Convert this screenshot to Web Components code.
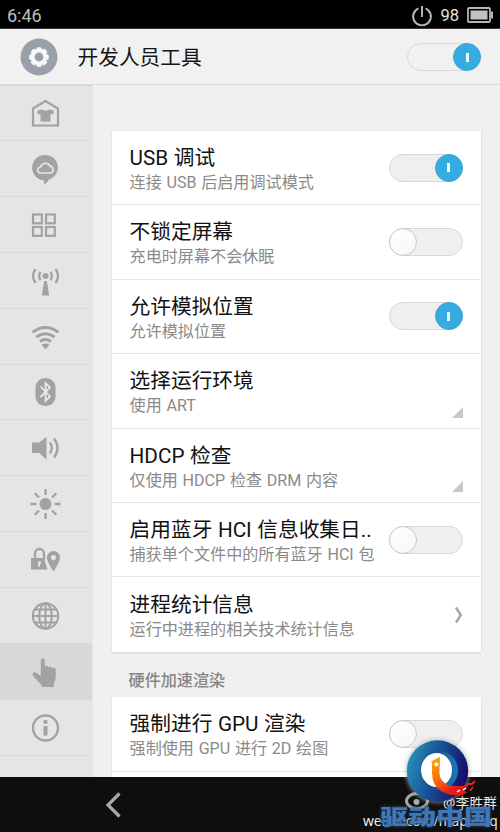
<!DOCTYPE html>
<html lang="zh-CN">
<head>
<meta charset="utf-8">
<title>开发人员工具</title>
<style>
html,body{margin:0;padding:0;background:#000}
body{width:500px;height:832px;overflow:hidden;font-family:Roboto,"Noto Sans CJK SC",sans-serif}
</style>
</head>
<body>
<settings-screen></settings-screen>
<script>
const define=(name,html,setup)=>customElements.define(name,class extends HTMLElement{
  constructor(){
    super();
    const t=document.createElement('template');
    t.innerHTML=html;
    this.attachShadow({mode:'open'}).append(t.content.cloneNode(true));
  }
  connectedCallback(){ if(setup) setup(this,this.shadowRoot); }
});

define('status-bar',`<style>
:host{display:flex;align-items:center;box-sizing:border-box;height:29px;padding:1px 7px 0 7px;background:#000;color:#bdbdbd;border-bottom:1px solid #383538;flex:none}
.time{flex:1;font-size:18px;line-height:26px;padding-top:2px}
.pct{font-size:16.5px;line-height:26px;color:#e4e4e4;padding-top:2px;margin:0 8px 0 7px}
svg{display:block}
</style>
<span class="time">6:46</span>
<svg width="22" height="24" viewBox="0 0 22 24" fill="none" stroke="#b9b9b9" stroke-width="1.9"><path d="M7.400 5.300A8.900 8.900 0 1 0 14.600 5.300M11 3v11"/></svg>
<span class="pct">98</span>
<svg width="26" height="16" viewBox="0 0 26 16"><rect x="1" y="1" width="22" height="14" rx="1" fill="none" stroke="#b5b5b5" stroke-width="1.8"/><rect x="3.500" y="3.500" width="17" height="9" fill="#c1c1c1"/><path d="M24 4.500h2v7h-2z" fill="#b5b5b5"/></svg>`);

define('toggle-switch',`<style>
:host{display:block;box-sizing:border-box;width:74px;height:28px;border:1px solid #d8d8d8;border-radius:14px;background:#efefef;flex:none}
.knob{box-sizing:border-box;width:28px;height:28px;margin:-1px;border-radius:50%;background:linear-gradient(135deg,#fff,#f6f6f6);border:1px solid #c8c8c8;display:flex;align-items:center;justify-content:center}
:host([on]) .knob{margin-left:45px;background:#34ace1;border-color:#43a3d0}
:host([on]) .knob::after{content:"";width:3px;height:9px;background:#f4fbff}
:host([plain]){background:#f1f1f1}
</style><div class="knob"></div>`);

define('title-bar',`<style>
:host{display:flex;align-items:center;box-sizing:border-box;height:56px;padding:0 19px 0 20px;background:#f1f1f1;border-bottom:1px solid #dadada;flex:none}
.name{flex:1;font-size:20.700px;line-height:30px;color:#151515;margin-left:19.500px;padding-top:2px;white-space:nowrap}
toggle-switch{margin-top:1px}
</style>
<svg width="38" height="38" viewBox="0 0 38 38"><circle cx="19" cy="19" r="18.500" fill="#98a1a9"/><g fill="#f7f8f9"><circle cx="19" cy="19" r="8.300"/><rect x="16.300" y="9.200" width="5.400" height="19.600" rx="1.500"/><rect x="16.300" y="9.200" width="5.400" height="19.600" rx="1.500" transform="rotate(45 19 19)"/><rect x="16.300" y="9.200" width="5.400" height="19.600" rx="1.500" transform="rotate(90 19 19)"/><rect x="16.300" y="9.200" width="5.400" height="19.600" rx="1.500" transform="rotate(135 19 19)"/></g><circle cx="19" cy="19" r="4.400" fill="#98a1a9"/></svg>
<span class="name"><slot></slot></span><toggle-switch on plain></toggle-switch>`);

const glyphs={
theme:`<path d="M4 11.500 16.500 4 29 11.500V28.500H4z" fill="none" stroke="#a2a2a2" stroke-width="2.200"/><path d="M8.500 13.500 13 12.500q3.500 2.400 7 0l4.500 1v3.800h-3V24.500h-10v-7.200h-3z"/>`,
cloud:`<path d="M16.500 2a12.500 12.500 0 0 1 3.500 24.500q-1.500 3-5 5.500l.2-4.700A12.600 12.600 0 0 1 16.500 2z"/><path d="M11.500 20a3 3 0 0 1 .2-6 5 5 0 0 1 9.300-.8 3.500 3.500 0 0 1 .8 6.800z" fill="none" stroke="#e5e5e5" stroke-width="1.700"/>`,
apps:`<g fill="none" stroke="#a2a2a2" stroke-width="2.200"><rect x="4" y="5.500" width="8.800" height="8.800"/><rect x="17" y="5.500" width="8.800" height="8.800"/><rect x="4" y="18" width="8.800" height="8.800"/><rect x="17" y="18" width="8.800" height="8.800"/></g>`,
antenna:`<circle cx="16.500" cy="11" r="3"/><path d="M15.200 16h2.600l2.400 14.500h-7.400z"/><path d="M11.500 6.800q-2.600 4.200 0 8.400M21.500 6.800q2.600 4.200 0 8.400M6.500 4q-5 7 0 14M26.500 4q5 7 0 14" fill="none" stroke="#a2a2a2" stroke-width="2.300"/>`,
wifi:`<path d="M3.500 11.300q13-9.600 26 0M7.300 16q9.200-6.600 18.400 0M11 20.500q5.500-3.800 11 0" fill="none" stroke="#a2a2a2" stroke-width="2.900"/><path d="m12.500 23.500q4-2 8 0l-4 5z"/>`,
bt:`<rect x="6.500" y="2" width="20" height="28" rx="9.500"/><path d="m11.500 10.500 9.500 10-4.500 4.500V7L21 11.500l-9.500 9.500" fill="none" stroke="#e8e8e8" stroke-width="1.800"/>`,
sound:`<path d="M3 10.500h7L17.500 5v22.500L10 21H3z"/><path d="M20.800 10.500q4 5.500 0 11M25 6.500q7 9.500 0 19" fill="none" stroke="#a2a2a2" stroke-width="2.300"/>`,
sun:`<circle cx="16.500" cy="16" r="6"/><path d="M16.500 1v6M16.500 25v6M1.500 16h6M25.500 16h6M5.700 5.200 10 9.500M23 22.500l4.300 4.300M27.300 5.200 23 9.500M10 22.500l-4.300 4.300" fill="none" stroke="#a2a2a2" stroke-width="2.300"/>`,
lock:`<path d="M2 14h13.500q.5 5 3 11.500H2z"/><path d="M6 15V9.500a4.500 4.500 0 0 1 9 0V15" fill="none" stroke="#a2a2a2" stroke-width="2.300"/><path d="M9 17.500h3v2.500h-1v3H9.500v-3H9z" fill="#e5e5e5"/><path d="M24.500 7a6.600 6.600 0 0 1 6.600 6.600q0 4.400-6.600 13.900-6.600-9.500-6.600-13.900A6.600 6.600 0 0 1 24.500 7zm0 4a2.600 2.600 0 1 0 .01 0z" fill-rule="evenodd"/>`,
globe:`<g fill="none" stroke="#a2a2a2" stroke-width="2"><circle cx="16.500" cy="16" r="12.700"/><ellipse cx="16.500" cy="16" rx="6.300" ry="12.700"/><path d="M16.500 3v26M4 16h25M6 9.500h21M6 22.500h21"/></g>`,
hand:`<path d="M11.800 4.500q0-2.300 2-2.300t2 2.300v7q.2-2 2-1.800 1.700.1 1.800 2.300.2-1.700 1.900-1.500 1.700.2 1.700 2.200.3-1.300 1.900-1.100 1.600.3 1.600 2.400v6q0 4.500-1.700 7V31H12.500v-2L4.500 20.500q-2-3 0-4 1.500-.7 4 1l3.300 2.500z"/>`,
info:`<circle cx="16.500" cy="16" r="12.500" fill="none" stroke="#a2a2a2" stroke-width="2.300"/><rect x="14.500" y="8" width="4" height="4" rx="1.400"/><path d="M14.500 14h4v9.500h-4z"/>`
};
define('side-item',`<style>
:host{display:flex;align-items:center;box-sizing:border-box;height:55.91px;padding:2px 0 0 29px;border-bottom:1px solid #d9d9d9;flex:none}
:host([selected]){background:#d8d8d8}
svg{display:block;fill:#a2a2a2}
</style><svg width="33" height="33" viewBox="0 0 33 33"></svg>`,(el,root)=>{root.querySelector('svg').innerHTML=glyphs[el.getAttribute('icon')]});

define('side-rail',`<style>
:host{display:flex;flex-direction:column;box-sizing:border-box;width:93px;background:#e5e5e5;border-right:1px solid #e3e3e3;flex:none;overflow:hidden;box-shadow:inset 0 1px 0 #d2d2d2}
</style><slot></slot>`);

define('setting-row',`<style>
:host{display:flex;align-items:center;box-sizing:border-box;height:74.4px;padding:0 18px;border-bottom:1px solid #e9e9e9;flex:none}
:host([last]){border-bottom:0}
.text{flex:1;min-width:0;white-space:nowrap;padding-top:4.5px}
.title{font-size:20.700px;line-height:26px;color:#111;word-spacing:.4px}
.sub{font-size:16.100px;line-height:24px;color:#8a8a8a;word-spacing:.7px}
.end{display:flex;align-items:center;height:100%;flex:none}
.corner{align-self:flex-end;margin-bottom:10px}
svg{display:block}
</style><div class="text"><div class="title"></div><div class="sub"></div></div><div class="end"></div>`,(el,root)=>{
  root.querySelector('.title').textContent=el.getAttribute('label');
  root.querySelector('.sub').textContent=el.getAttribute('note');
  root.querySelector('.end').innerHTML={
    on:'<toggle-switch on></toggle-switch>',
    off:'<toggle-switch></toggle-switch>',
    menu:'<svg class="corner" width="11" height="11" viewBox="0 0 11 11"><path d="M11 0v11H0z" fill="#c8c8c8"/></svg>',
    go:'<svg width="10" height="18" viewBox="0 0 10 18"><path d="M3 1.500 7.800 9 3 16.500" fill="none" stroke="#a8a8a8" stroke-width="2.500"/></svg>'
  }[el.getAttribute('kind')]||'';
});

define('setting-card',`<style>
:host{display:flex;flex-direction:column;width:369.400px;background:#fff;box-shadow:0 1px 2px rgba(0,0,0,.14);flex:none}
</style><slot></slot>`);

define('section-label',`<style>
:host{display:block;height:45.500px;box-sizing:border-box;padding:17px 0 0 17px;font-size:16.100px;line-height:24px;font-weight:500;color:#858585;flex:none}
</style><slot></slot>`);

define('nav-bar',`<style>
:host{display:flex;align-items:center;height:55px;padding-left:104px;background:#0e0e0e;flex:none}
svg{display:block}
</style><svg width="18" height="28" viewBox="0 0 18 28"><path d="M15.500 2.500 4 14l11.500 11.500" fill="none" stroke="#a9a9a9" stroke-width="3.200"/></svg>`);

define('photo-credit',`<style>
:host{position:absolute;right:0;bottom:0;width:140px;height:96px;color:#ececec;font-family:"Noto Sans","Noto Sans CJK SC",sans-serif;white-space:nowrap}
svg,span{position:absolute}
svg{left:0;top:0}
.user{left:83px;top:57px;font-size:13.800px;line-height:20px}
.url{left:3px;top:75px;font-size:13.800px;line-height:20px}
.brand{left:20px;top:64.500px;font:900 28px/28px "Noto Sans CJK SC",sans-serif;color:#3c78bb;transform:scaleY(.75);text-shadow:0 0 2px #162b48,0 0 4px #3c5878}
</style>
<span class="user">@李胜群</span>
<svg width="140" height="96" viewBox="360 736 140 96"><g fill="none" stroke="#a5a5a5" stroke-width="3"><ellipse cx="417" cy="801" rx="10.500" ry="7.500"/><path d="M424 792q9-2 8 8"/></g><circle cx="416.500" cy="802" r="3" fill="#aaa"/></svg>
<span class="url">weibo.com/maplelsq</span>
<span class="brand">驱动中国</span>
<svg width="140" height="96" viewBox="360 736 140 96"><defs><linearGradient id="b" x1="0" y1=".2" x2="1" y2=".5"><stop stop-color="#2896bb"/><stop offset=".5" stop-color="#174f94"/><stop offset="1" stop-color="#160d68"/></linearGradient><linearGradient id="c" x1="0" y1="0" x2="1" y2="0"><stop stop-color="#123a80"/><stop offset="1" stop-color="#1c78b4"/></linearGradient><linearGradient id="o" x1="0" y1="0" x2=".7" y2="1"><stop stop-color="#ffb000"/><stop offset=".5" stop-color="#f96b12"/><stop offset=".85" stop-color="#e61b16"/></linearGradient><filter id="h" x="-30%" y="-30%" width="160%" height="160%"><feGaussianBlur stdDeviation="2"/></filter></defs>
<circle cx="437.500" cy="771" r="32" fill="#a9adb0" opacity=".65" filter="url(#h)"/>
<circle cx="437.500" cy="771" r="30.700" fill="url(#b)"/>
<ellipse cx="439.500" cy="770.500" rx="18.500" ry="19.500" fill="url(#c)"/>
<ellipse cx="436.500" cy="770" rx="15.500" ry="17" fill="#fff"/>
<path d="M430.700 761.700 440 756.700 439.400 773Q440 781 447 784.500 453 787 468 785.500L463 790 467 792.500 461 795.500Q449 796 441 791 432 785 432 773V762.500z" fill="url(#o)"/><circle cx="436.300" cy="764.500" r="1.900" fill="#fff"/>
<path d="m465 787 3-3 4 0 3-3M470 791l3-4" fill="none" stroke="#df232d" stroke-width="2"/><path d="m457 792 3-2M463 790l3-2" stroke="#fff" stroke-width="1.500"/></svg>`);

define('settings-screen',`<style>
:host{display:flex;flex-direction:column;width:500px;height:832px;position:relative;overflow:hidden}
.body{display:flex;height:692px;flex:none;background:#f0f0f0}
.list{flex:1;display:flex;flex-direction:column;padding:46px 0 0 18.600px;overflow:hidden}
</style>
<status-bar></status-bar><title-bar>开发人员工具</title-bar>
<div class="body"><side-rail>
<side-item icon="theme"></side-item><side-item icon="cloud"></side-item><side-item icon="apps"></side-item><side-item icon="antenna"></side-item><side-item icon="wifi"></side-item><side-item icon="bt"></side-item><side-item icon="sound"></side-item><side-item icon="sun"></side-item><side-item icon="lock"></side-item><side-item icon="globe"></side-item><side-item icon="hand" selected></side-item><side-item icon="info"></side-item>
</side-rail><div class="list"><setting-card>
<setting-row label="USB 调试" note="连接 USB 后启用调试模式" kind="on"></setting-row>
<setting-row label="不锁定屏幕" note="充电时屏幕不会休眠" kind="off"></setting-row>
<setting-row label="允许模拟位置" note="允许模拟位置" kind="on"></setting-row>
<setting-row label="选择运行环境" note="使用 ART" kind="menu"></setting-row>
<setting-row label="HDCP 检查" note="仅使用 HDCP 检查 DRM 内容" kind="menu"></setting-row>
<setting-row label="启用蓝牙 HCI 信息收集日.." note="捕获单个文件中的所有蓝牙 HCI 包" kind="off"></setting-row>
<setting-row label="进程统计信息" note="运行中进程的相关技术统计信息" kind="go" last></setting-row>
</setting-card><section-label>硬件加速渲染</section-label><setting-card>
<setting-row label="强制进行 GPU 渲染" note="强制使用 GPU 进行 2D 绘图" kind="off"></setting-row>
<setting-row label="" note="" kind="none"></setting-row>
</setting-card></div></div>
<nav-bar></nav-bar><photo-credit></photo-credit>`);
</script>
</body>
</html>
